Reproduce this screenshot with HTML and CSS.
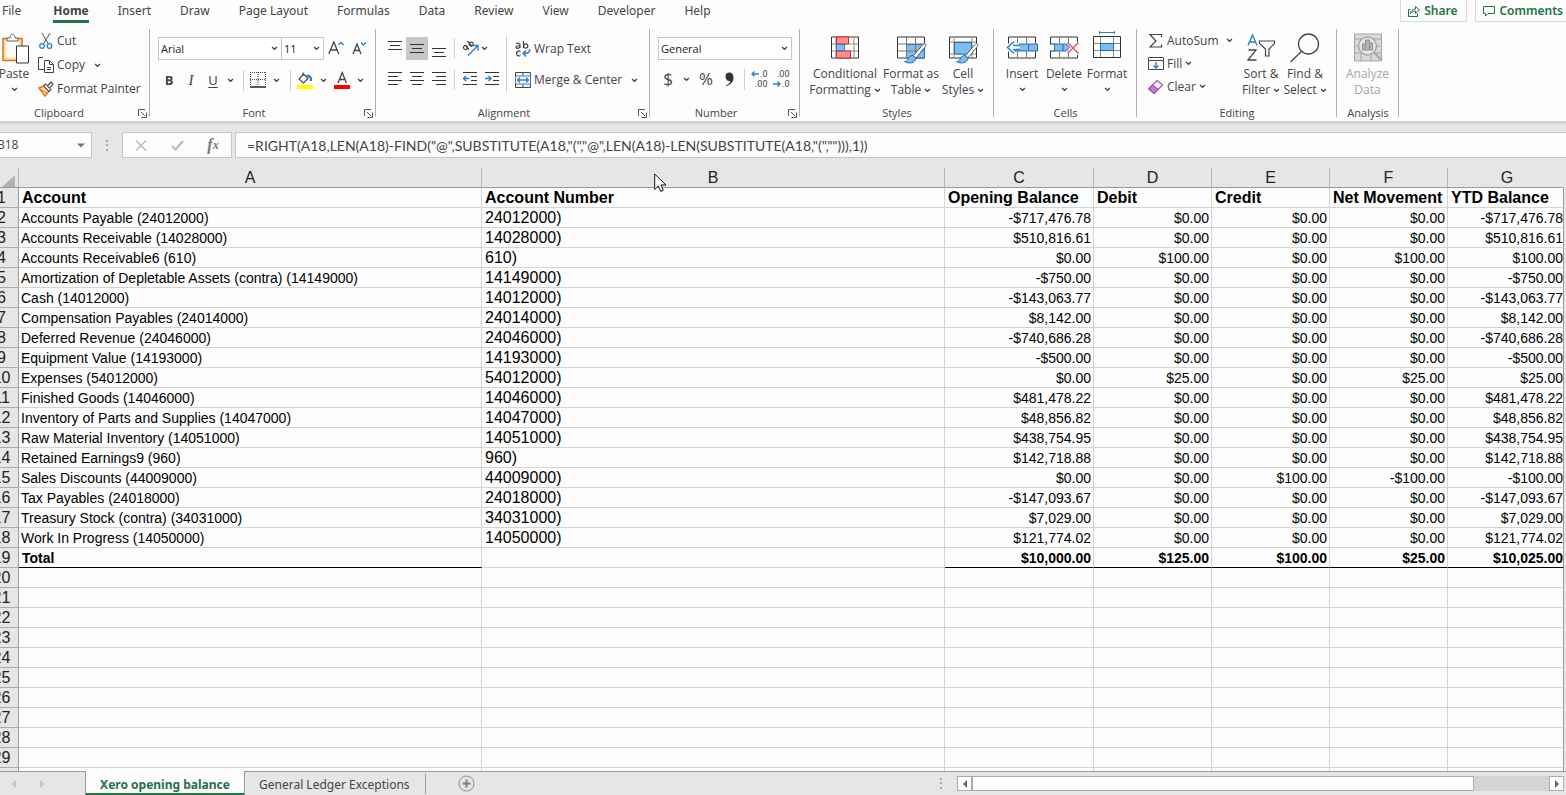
FILE: index.html
```html
<!DOCTYPE html>
<html lang="en">
<head>
<meta charset="utf-8">
<title>Xero opening balance</title>
<link rel="stylesheet" href="styles.css">
</head>
<body>
<svg class="defs" aria-hidden="true">
  <symbol id="chev" viewBox="0 0 7 5"><path d="M1 1 3.500 3.300 6 1" fill="none" stroke="#444" stroke-width="1.300"/></symbol>
  <symbol id="launch" viewBox="0 0 9 9"><path d="M.5 7V.5H7M3 3l4 4M8.500 3.500v5h-5" fill="none" stroke="#555"/></symbol>
  <symbol id="brush" viewBox="0 0 24 22"><path d="M22.500 1.500c-1-1-2 0-3 1l-9 10.500 2.500 2.500 8.500-10.500c1-1.300 2-2.500 1-3.500z" fill="#fff" stroke="#555"/><path d="M10 13c-3 0-4.500 2-5 4-.5 1.500-2 2-3.500 2 4 2.500 11 2 11.500-3.500z" fill="#83bbea" stroke="#1b6fb8"/></symbol>
</svg>

<header class="tabs">
  <nav class="tabs-list">
    <button class="tab">File</button>
    <button class="tab tab-active">Home</button>
    <button class="tab">Insert</button>
    <button class="tab">Draw</button>
    <button class="tab">Page Layout</button>
    <button class="tab">Formulas</button>
    <button class="tab">Data</button>
    <button class="tab">Review</button>
    <button class="tab">View</button>
    <button class="tab">Developer</button>
    <button class="tab">Help</button>
  </nav>
  <button class="pill"><svg width="12" height="12" viewBox="0 0 12 12" fill="none" stroke="#217346"><path d="M2.500 4.500h-2v7h9v-3"/><path d="M2.500 8.500c.5-3 2-4.500 5-4.500V1.500l4 3.500-4 3.500V6c-2 0-3.500.5-5 2.500z"/></svg>Share</button>
  <button class="pill pill-end"><svg width="12" height="12" viewBox="0 0 12 12" fill="none" stroke="#217346"><path d="M.5 1.500h11v7H5L2.500 11V8.500h-2z"/></svg>Comments</button>
</header>

<section class="ribbon">
  <div class="group g-clipboard">
    <div class="group-body">
      <button class="big paste">
        <svg width="30" height="32" viewBox="0 0 30 32"><path d="M4 5h19v22H4z" fill="#fae0a0" stroke="#d9741d" stroke-width="1.500"/><path d="M7 8h13v16H7z" fill="#fdfdfd"/><path d="M8 7.500V4.500h3C11-.5 16-.5 16 4.500h3v3z" fill="#fdfdfd" stroke="#666"/><path d="M17.500 12.500h12v17h-12z" fill="#fff" stroke="#333"/></svg>
        <span>Paste</span><svg class="chev"><use href="#chev"/></svg>
      </button>
      <div class="stack">
        <button class="small"><svg width="16" height="16" viewBox="0 0 16 16" fill="none"><path d="M4 0l6.500 11M12 0L5.500 11" stroke="#555"/><circle cx="4" cy="13" r="2.300" stroke="#2b7fcb" stroke-width="1.300"/><circle cx="11.500" cy="13" r="2.300" stroke="#2b7fcb" stroke-width="1.300"/></svg>Cut</button>
        <button class="small"><svg width="16" height="16" viewBox="0 0 16 16" fill="#fff" stroke="#444"><path d="M6 12.500H.5V.5H5"/><path d="M6.500 3.500h5l4 4v8h-9z"/><path d="M11.500 3.500v4h4M9 10.500h4M9 12.500h4" fill="none"/></svg>Copy<svg class="chev"><use href="#chev"/></svg></button>
        <button class="small"><svg width="16" height="16" viewBox="0 0 16 16"><path d="M1 7l5-2 5 5-4 5z" fill="#fbd9a5" stroke="#e07317" stroke-width="1.400"/><path d="M3 9l6 3" stroke="#e07317"/><path d="M5.500 5l2-2 5.500 5.500-2 2zM9.500 5l3.500-4 2 2-3.500 4" fill="#fff" stroke="#555" stroke-width="1.200"/></svg>Format Painter</button>
      </div>
    </div>
    <footer class="group-label has-launch">Clipboard<svg class="launch"><use href="#launch"/></svg></footer>
  </div>

  <div class="group g-font">
    <div class="group-body rows">
      <div class="font-top">
        <div class="combo"><select aria-label="Font"><option>Arial</option></select><svg class="chev"><use href="#chev"/></svg></div>
        <div class="combo combo-size"><select aria-label="Font size"><option>11</option></select><svg class="chev"><use href="#chev"/></svg></div>
        <button class="icon" aria-label="Increase font size"><svg width="17" height="16" viewBox="0 0 17 16" fill="none"><path d="M.8 13L5.800 1 10.800 13M2.500 9h6.600" stroke="#444" stroke-width="1.300"/><path d="M10.500 4L13 1.500 15.500 4" stroke="#2b7fcb" stroke-width="1.300"/></svg></button>
        <button class="icon" aria-label="Decrease font size"><svg width="15" height="16" viewBox="0 0 15 16" fill="none"><path d="M1 13L5 3 9 13M2.500 9.500h5" stroke="#444" stroke-width="1.300"/><path d="M9 1.500L11.500 4 14 1.500" stroke="#2b7fcb" stroke-width="1.300"/></svg></button>
      </div>
      <div class="font-tools">
        <button class="icon glyph bold">B</button>
        <button class="icon glyph italic">I</button>
        <button class="icon glyph under">U</button>
        <svg class="chev"><use href="#chev"/></svg>
        <i class="bar"></i>
        <button class="icon" aria-label="Borders"><svg width="16" height="16" viewBox="0 0 16 16" stroke="#444"><path d="M0 .5h16M.5 0v14M15.500 0v14M8 0v14M0 7.500h16" stroke-dasharray="1 1"/><path d="M0 15h16" stroke="#222" stroke-width="1.500"/></svg></button>
        <svg class="chev"><use href="#chev"/></svg>
        <i class="bar"></i>
        <button class="icon" aria-label="Fill color"><svg width="16" height="18" viewBox="0 0 16 18"><path d="M6.500 3L11 7.500 6.500 12 2 8zM6 5V1.500" fill="#fff" stroke="#444" stroke-width="1.200"/><path d="M9.500 4.500c3 0 5 1.500 4.500 5.500" fill="none" stroke="#1b6fb8" stroke-width="2"/><path d="M0 14h16v4H0z" fill="#ff0"/></svg></button>
        <svg class="chev"><use href="#chev"/></svg>
        <button class="icon" aria-label="Font color"><svg width="16" height="18" viewBox="0 0 16 18"><path d="M4 12L8.200 1.500 12.400 12M5.500 8.500h5.500" fill="none" stroke="#444" stroke-width="1.300"/><path d="M0 14h16v4H0z" fill="red"/></svg></button>
        <svg class="chev"><use href="#chev"/></svg>
      </div>
    </div>
    <footer class="group-label has-launch">Font<svg class="launch"><use href="#launch"/></svg></footer>
  </div>

  <div class="group g-align">
    <div class="group-body">
      <div class="align-tools">
        <button class="icon" aria-label="Top align"><svg width="14" height="16" viewBox="0 0 14 16" stroke="#333"><path d="M0 .5h14M2 4.500h10M0 8.500h14"/></svg></button>
        <button class="icon pressed" aria-label="Middle align"><svg width="14" height="16" viewBox="0 0 14 16" stroke="#333"><path d="M0 3.500h14M2 7.500h10M0 11.500h14"/></svg></button>
        <button class="icon" aria-label="Bottom align"><svg width="14" height="16" viewBox="0 0 14 16" stroke="#333"><path d="M0 7.500h14M2 11.500h10M0 15.500h14"/></svg></button>
        <i class="bar"></i>
        <button class="icon" aria-label="Orientation"><svg width="17" height="17" viewBox="0 0 17 17" fill="none"><g stroke="#444" stroke-width="1.200"><circle cx="3.500" cy="7.500" r="2"/><path d="M3 5l4 4.500M5.500 1l4.500 5.500"/><circle cx="9.300" cy="4.200" r="2"/></g><path d="M6 15.500L15.500 6M11 5.500h5v5" stroke="#2b7fcb" stroke-width="1.400"/></svg></button>
        <svg class="chev"><use href="#chev"/></svg>
        <button class="icon" aria-label="Align left"><svg width="14" height="14" viewBox="0 0 14 14" stroke="#333"><path d="M0 .5h14M0 4.500h10M0 8.500h14M0 12.500h10"/></svg></button>
        <button class="icon" aria-label="Center"><svg width="14" height="14" viewBox="0 0 14 14" stroke="#333"><path d="M0 .5h14M2 4.500h10M0 8.500h14M2 12.500h10"/></svg></button>
        <button class="icon" aria-label="Align right"><svg width="14" height="14" viewBox="0 0 14 14" stroke="#333"><path d="M0 .5h14M4 4.500h10M0 8.500h14M4 12.500h10"/></svg></button>
        <i class="bar"></i>
        <button class="icon" aria-label="Decrease indent"><svg width="14" height="14" viewBox="0 0 14 14" stroke="#333" fill="none"><path d="M0 .5h14M8 4.500h6M8 8.500h6M0 12.500h14"/><path d="M6.500 6.500h-6M3 4L.5 6.500 3 9" stroke="#2b7fcb" stroke-width="1.400"/></svg></button>
        <button class="icon" aria-label="Increase indent"><svg width="14" height="14" viewBox="0 0 14 14" stroke="#333" fill="none"><path d="M0 .5h14M8 4.500h6M8 8.500h6M0 12.500h14"/><path d="M0 6.500h6M3.500 4L6 6.500 3.500 9" stroke="#2b7fcb" stroke-width="1.400"/></svg></button>
      </div>
      <div class="align-text">
        <button class="small"><svg width="16" height="16" viewBox="0 0 16 16" fill="none"><g stroke="#444" stroke-width="1.200"><path d="M1 2.500c2.500-1 4 0 4 1.500v3M5 4.500c-5 0-5 3-2 2.800L5 6M8.500 0v7"/><circle cx="10.700" cy="5" r="2.100"/><path d="M5.500 10.500c-2-1-4 0-4 2s2 3 4 2"/></g><path d="M14.500 8c.5 3-1 4.500-6 4.500M11 9.500l-3 3 3 3" stroke="#2b7fcb" stroke-width="1.500"/></svg>Wrap Text</button>
        <button class="small"><svg width="16" height="16" viewBox="0 0 16 16" fill="none"><path d="M.5 .5h15v15H.5zM8 0v4M8 12v4" stroke="#444"/><path d="M.5 4h15v8H.5z" fill="#fff" stroke="#2b7fcb"/><path d="M3 8h10M5 5.500L2.500 8 5 10.500M11 5.500L13.500 8 11 10.500" stroke="#2b7fcb" stroke-width="1.300"/></svg>Merge &amp; Center<svg class="chev"><use href="#chev"/></svg></button>
      </div>
    </div>
    <footer class="group-label has-launch">Alignment<svg class="launch"><use href="#launch"/></svg></footer>
  </div>

  <div class="group g-number">
    <div class="group-body rows">
      <div class="combo"><select aria-label="Number format"><option>General</option></select><svg class="chev"><use href="#chev"/></svg></div>
      <div class="number-tools">
        <button class="icon sign">$</button>
        <svg class="chev"><use href="#chev"/></svg>
        <button class="icon sign">%</button>
        <button class="icon" aria-label="Comma style"><svg width="9" height="14" viewBox="0 0 9 14"><path d="M1 13c3-.5 4-2 4-4C2.500 9.500.500 7.500.500 4.500.500 2 2 .5 4.300.5 7 .5 8.500 2.500 8.500 5.500 8.500 10 5.500 13 1 14z" fill="#333"/></svg></button>
        <i class="bar"></i>
        <button class="icon dec" aria-label="Increase decimal"><svg width="8" height="8" viewBox="0 0 8 8" fill="none" stroke="#2b7fcb" stroke-width="1.300"><path d="M8 4H1M3.500 1.500L1 4l2.500 2.500"/></svg><span>.0</span><span class="dec-wide">.00</span></button>
        <button class="icon dec" aria-label="Decrease decimal"><span class="dec-wide">.00</span><svg width="8" height="8" viewBox="0 0 8 8" fill="none" stroke="#2b7fcb" stroke-width="1.300"><path d="M0 4h7M4.500 1.500L7 4 4.500 6.500"/></svg><span>.0</span></button>
      </div>
    </div>
    <footer class="group-label has-launch">Number<svg class="launch"><use href="#launch"/></svg></footer>
  </div>

  <div class="group g-styles">
    <div class="group-body">
      <button class="big w80"><svg width="30" height="32" viewBox="0 0 30 32"><path d="M1.500 3.500h27v21h-27z" fill="#fff" stroke="#333"/><path d="M6 4v20M24 4v20M2 10.500h26M2 17.500h26" stroke="#8a8a76"/><path d="M6.500 3.500h12v7h-12zM6.500 17.500h14v7h-14z" fill="#ff8f94" stroke="#d8201f"/><path d="M6.500 11h8v6h-8z" fill="#83bbea" stroke="#2b7fcb"/></svg><span>Conditional</span><span>Formatting <svg class="chev"><use href="#chev"/></svg></span></button>
      <button class="big w52"><svg width="32" height="32" viewBox="0 0 32 32"><path d="M2.500 3.500h27v21h-27z" fill="#fff" stroke="#333"/><path d="M11.500 11h18v13.500h-18z" fill="#83bbea" stroke="#1b6fb8"/><path d="M11.500 4v20M20.500 4v20M3 10.500h26M3 17.500h26" stroke="#777" fill="none"/><use href="#brush" x="8" y="9" width="24" height="22"/></svg><span>Format as</span><span>Table <svg class="chev"><use href="#chev"/></svg></span></button>
      <button class="big w52"><svg width="32" height="32" viewBox="0 0 32 32"><path d="M2.500 3.500h27v21h-27z" fill="#fff" stroke="#333"/><path d="M7 4v20M3 8.500h26M25 4v20M3 20.500h26" stroke="#8a8a76"/><path d="M7.500 9h17v11.500h-17z" fill="#83bbea" stroke="#1b6fb8"/><use href="#brush" x="8" y="9" width="24" height="22"/></svg><span>Cell</span><span>Styles <svg class="chev"><use href="#chev"/></svg></span></button>
    </div>
    <footer class="group-label">Styles</footer>
  </div>

  <div class="group g-cells">
    <div class="group-body">
      <button class="big w42"><svg width="32" height="32" viewBox="0 0 32 32" fill="none"><path d="M2.500 10V3.500h27V10M2.500 18v6.500h27V18" stroke="#333"/><path d="M11.500 4v6M20.500 4v6M11.500 18v6M20.500 18v6" stroke="#777"/><path d="M13 10.500h18.500v7H8" fill="#83bbea" stroke="#1b6fb8"/><path d="M22.500 11v6" stroke="#1b6fb8"/><path d="M14 12H7M14 16H7M8 8L1.500 14 8 20" stroke="#2b7fcb" stroke-width="1.500"/><path d="M4 14h10" stroke="#fff" stroke-width="2"/></svg><span>Insert</span><svg class="chev"><use href="#chev"/></svg></button>
      <button class="big w42"><svg width="32" height="32" viewBox="0 0 32 32" fill="none"><path d="M2.500 10.500v-7h27v5M2.500 17.500v7h27v-3M2 10.500h5M2 17.500h5" stroke="#333"/><path d="M11.500 4v6M20.500 4v6M11.500 18v6M20.500 18v6" stroke="#777"/><path d="M6.500 10.500h12l3 3.500-3 3.500h-12zM15 11v6" fill="#83bbea" stroke="#1b6fb8"/><path d="M19.500 9l11 11M30.500 9l-11 11" stroke="#ee5a5a" stroke-width="1.600"/></svg><span>Delete</span><svg class="chev"><use href="#chev"/></svg></button>
      <button class="big w44"><svg width="32" height="33" viewBox="0 2 32 33" fill="none"><path d="M2.500 5.500h27v21h-27z" stroke="#333"/><path d="M9.500 6v20M22.500 6v20M3 12.500h26M3 19.500h26" stroke="#8a8a76"/><path d="M9.500 12.500h13v7h-13z" fill="#83bbea" stroke="#1b6fb8"/><path d="M8.500 1.500h15M8.500 0v3M23.500 0v3" stroke="#2b7fcb"/></svg><span>Format</span><svg class="chev"><use href="#chev"/></svg></button>
    </div>
    <footer class="group-label">Cells</footer>
  </div>

  <div class="group g-editing">
    <div class="group-body">
      <div class="stack">
        <button class="small spread"><svg width="16" height="16" viewBox="0 0 16 16" fill="none" stroke="#444" stroke-width="1.200"><path d="M13.500 4V1.500H2L8 8l-6 6h11.500v-2.500"/></svg>AutoSum<svg class="chev"><use href="#chev"/></svg></button>
        <button class="small"><svg width="16" height="16" viewBox="0 0 16 16" fill="none"><path d="M.5 1.500h15v12H.5zM1 4.500h14" stroke="#444"/><path d="M8 6v6M5.500 9.500L8 12l2.500-2.500" stroke="#2b7fcb" stroke-width="1.400"/></svg>Fill<svg class="chev"><use href="#chev"/></svg></button>
        <button class="small"><svg width="16" height="16" viewBox="0 0 16 16"><path d="M9 1.500L14.500 6 6 14.500.8 9.800z" fill="#fff" stroke="#a34fb0" stroke-width="1.200"/><path d="M4.500 6L10 10.500 6 14.500.8 9.800z" fill="#c77fd0" stroke="#a34fb0" stroke-width="1.200"/></svg>Clear<svg class="chev"><use href="#chev"/></svg></button>
      </div>
      <button class="big w44"><svg width="30" height="32" viewBox="0 0 30 32" fill="none"><path d="M2 12L6.500 1.500 11 12M3.500 8.500h6" stroke="#2b7fcb" stroke-width="1.400"/><path d="M2.500 16.500H10L2 26.500h8.500" stroke="#444" stroke-width="1.300"/><path d="M13.500 7.500h15v2.500l-5.500 5.500v7h-3.500v-7L13.500 10z" stroke="#444" stroke-width="1.200"/></svg><span>Sort &amp;</span><span>Filter <svg class="chev"><use href="#chev"/></svg></span></button>
      <button class="big w44"><svg width="30" height="32" viewBox="0 0 30 32" fill="none" stroke="#444" stroke-width="1.300"><circle cx="18.500" cy="10.500" r="10"/><path d="M11.500 18L.5 28.500"/></svg><span>Find &amp;</span><span>Select <svg class="chev"><use href="#chev"/></svg></span></button>
    </div>
    <footer class="group-label">Editing</footer>
  </div>

  <div class="group g-analysis">
    <div class="group-body">
      <button class="big disabled" disabled><svg width="28" height="32" viewBox="0 0 28 32" fill="none" stroke="#a6a6a6"><path d="M.5 .5h27v27H.5z" fill="#d9d9d9"/><path d="M0 5.500h28M0 19.500h28M0 12.500h28M7 20v8M17 20v8"/><circle cx="13.500" cy="12.500" r="9" fill="#e6e6e6" stroke-width="1.400"/><path d="M20 19l8 8" stroke-width="2"/><path d="M8.500 10.500h3v6h-3zM11.500 6.500h4v10h-4zM15.500 9.500h3v7h-3z" fill="#b5b5b5" stroke="#8c8c8c"/></svg><span>Analyze</span><span>Data</span></button>
    </div>
    <footer class="group-label">Analysis</footer>
  </div>
</section>

<section class="formula-bar">
  <div class="name-box"><input aria-label="Name box" value="B18"><svg width="8" height="5" viewBox="0 0 8 5"><path d="M0 .5h8L4 4.500z" fill="#777"/></svg></div>
  <svg class="dots" width="2" height="11" viewBox="0 0 2 11"><path d="M0 0h2v2H0zM0 4h2v2H0zM0 9h2v2H0z" fill="#a6a6a6"/></svg>
  <div class="fx-box">
    <button class="icon" aria-label="Cancel"><svg width="12" height="11" viewBox="0 0 12 11" stroke="#bdbdbd" stroke-width="1.500"><path d="M1 .5l10 10M11 .5l-10 10"/></svg></button>
    <button class="icon" aria-label="Enter"><svg width="13" height="11" viewBox="0 0 13 11" fill="none" stroke="#bdbdbd" stroke-width="2.200"><path d="M1 6l3.500 3.500L12 1"/></svg></button>
    <button class="icon fx">f<sub>x</sub></button>
  </div>
  <input class="formula" aria-label="Formula" value='=RIGHT(A18,LEN(A18)-FIND("@",SUBSTITUTE(A18,"(","@",LEN(A18)-LEN(SUBSTITUTE(A18,"(",""))),1))'>
</section>

<main class="sheet">
  <table class="grid">
    <colgroup><col class="c-row"><col><col><col class="c-open"><col class="c-num"><col class="c-num"><col class="c-num"><col class="c-ytd"></colgroup>
    <thead>
      <tr><th class="corner"><svg width="13" height="12" viewBox="0 0 13 12"><path d="M13 0v12H0z" fill="#b1b1b1"/></svg></th><th>A</th><th>B</th><th>C</th><th>D</th><th>E</th><th>F</th><th>G</th></tr>
    </thead>
    <tbody>
      <tr class="titles"><th>1</th><td>Account</td><td>Account Number</td><td>Opening Balance</td><td>Debit</td><td>Credit</td><td>Net Movement</td><td>YTD Balance</td></tr>
      <tr><th>2</th><td>Accounts Payable (24012000)</td><td>24012000)</td><td>-$717,476.78</td><td>$0.00</td><td>$0.00</td><td>$0.00</td><td>-$717,476.78</td></tr>
      <tr><th>3</th><td>Accounts Receivable (14028000)</td><td>14028000)</td><td>$510,816.61</td><td>$0.00</td><td>$0.00</td><td>$0.00</td><td>$510,816.61</td></tr>
      <tr><th>4</th><td>Accounts Receivable6 (610)</td><td>610)</td><td>$0.00</td><td>$100.00</td><td>$0.00</td><td>$100.00</td><td>$100.00</td></tr>
      <tr><th>5</th><td>Amortization of Depletable Assets (contra) (14149000)</td><td>14149000)</td><td>-$750.00</td><td>$0.00</td><td>$0.00</td><td>$0.00</td><td>-$750.00</td></tr>
      <tr><th>6</th><td>Cash (14012000)</td><td>14012000)</td><td>-$143,063.77</td><td>$0.00</td><td>$0.00</td><td>$0.00</td><td>-$143,063.77</td></tr>
      <tr><th>7</th><td>Compensation Payables (24014000)</td><td>24014000)</td><td>$8,142.00</td><td>$0.00</td><td>$0.00</td><td>$0.00</td><td>$8,142.00</td></tr>
      <tr><th>8</th><td>Deferred Revenue (24046000)</td><td>24046000)</td><td>-$740,686.28</td><td>$0.00</td><td>$0.00</td><td>$0.00</td><td>-$740,686.28</td></tr>
      <tr><th>9</th><td>Equipment Value (14193000)</td><td>14193000)</td><td>-$500.00</td><td>$0.00</td><td>$0.00</td><td>$0.00</td><td>-$500.00</td></tr>
      <tr><th>10</th><td>Expenses (54012000)</td><td>54012000)</td><td>$0.00</td><td>$25.00</td><td>$0.00</td><td>$25.00</td><td>$25.00</td></tr>
      <tr><th>11</th><td>Finished Goods (14046000)</td><td>14046000)</td><td>$481,478.22</td><td>$0.00</td><td>$0.00</td><td>$0.00</td><td>$481,478.22</td></tr>
      <tr><th>12</th><td>Inventory of Parts and Supplies (14047000)</td><td>14047000)</td><td>$48,856.82</td><td>$0.00</td><td>$0.00</td><td>$0.00</td><td>$48,856.82</td></tr>
      <tr><th>13</th><td>Raw Material Inventory (14051000)</td><td>14051000)</td><td>$438,754.95</td><td>$0.00</td><td>$0.00</td><td>$0.00</td><td>$438,754.95</td></tr>
      <tr><th>14</th><td>Retained Earnings9 (960)</td><td>960)</td><td>$142,718.88</td><td>$0.00</td><td>$0.00</td><td>$0.00</td><td>$142,718.88</td></tr>
      <tr><th>15</th><td>Sales Discounts (44009000)</td><td>44009000)</td><td>$0.00</td><td>$0.00</td><td>$100.00</td><td>-$100.00</td><td>-$100.00</td></tr>
      <tr><th>16</th><td>Tax Payables (24018000)</td><td>24018000)</td><td>-$147,093.67</td><td>$0.00</td><td>$0.00</td><td>$0.00</td><td>-$147,093.67</td></tr>
      <tr><th>17</th><td>Treasury Stock (contra) (34031000)</td><td>34031000)</td><td>$7,029.00</td><td>$0.00</td><td>$0.00</td><td>$0.00</td><td>$7,029.00</td></tr>
      <tr><th>18</th><td>Work In Progress (14050000)</td><td>14050000)</td><td>$121,774.02</td><td>$0.00</td><td>$0.00</td><td>$0.00</td><td>$121,774.02</td></tr>
      <tr class="total"><th>19</th><td>Total</td><td></td><td>$10,000.00</td><td>$125.00</td><td>$100.00</td><td>$25.00</td><td>$10,025.00</td></tr>
      <tr><th>20</th><td></td><td></td><td></td><td></td><td></td><td></td><td></td></tr>
      <tr><th>21</th><td></td><td></td><td></td><td></td><td></td><td></td><td></td></tr>
      <tr><th>22</th><td></td><td></td><td></td><td></td><td></td><td></td><td></td></tr>
      <tr><th>23</th><td></td><td></td><td></td><td></td><td></td><td></td><td></td></tr>
      <tr><th>24</th><td></td><td></td><td></td><td></td><td></td><td></td><td></td></tr>
      <tr><th>25</th><td></td><td></td><td></td><td></td><td></td><td></td><td></td></tr>
      <tr><th>26</th><td></td><td></td><td></td><td></td><td></td><td></td><td></td></tr>
      <tr><th>27</th><td></td><td></td><td></td><td></td><td></td><td></td><td></td></tr>
      <tr><th>28</th><td></td><td></td><td></td><td></td><td></td><td></td><td></td></tr>
      <tr><th>29</th><td></td><td></td><td></td><td></td><td></td><td></td><td></td></tr>
      <tr><th></th><td></td><td></td><td></td><td></td><td></td><td></td><td></td></tr>
    </tbody>
  </table>
</main>

<footer class="sheet-bar">
  <div class="sheet-nav">
    <svg width="5" height="8" viewBox="0 0 5 8"><path d="M5 0v8L0 4z" fill="#c3c3c3"/></svg>
    <svg width="5" height="8" viewBox="0 0 5 8"><path d="M0 0v8l5-4z" fill="#c3c3c3"/></svg>
  </div>
  <button class="sheet-tab sheet-active">Xero opening balance</button>
  <div class="sheet-rest">
    <button class="sheet-tab">General Ledger Exceptions</button>
    <i class="sheet-line"></i>
    <button class="icon add" aria-label="New sheet"><svg width="17" height="17" viewBox="0 0 17 17" fill="none"><circle cx="8.500" cy="8.500" r="7.500" stroke="#8c8c8c"/><path d="M8.500 4.500v8M4.500 8.500h8" stroke="#7c8466" stroke-width="2"/></svg></button>
    <svg class="dots scroll-dots" width="2" height="11" viewBox="0 0 2 11"><path d="M0 0h2v2H0zM0 4h2v2H0zM0 9h2v2H0z" fill="#a6a6a6"/></svg>
    <div class="scroll">
      <button class="scroll-end" aria-label="Scroll left"><svg width="4" height="8" viewBox="0 0 4 8"><path d="M4 0v8L0 4z" fill="#666b52"/></svg></button>
      <div class="scroll-track"><div class="scroll-thumb"></div></div>
      <button class="scroll-end" aria-label="Scroll right"><svg width="4" height="8" viewBox="0 0 4 8"><path d="M0 0v8l4-4z" fill="#666b52"/></svg></button>
    </div>
  </div>
</footer>

<svg class="pointer" width="13" height="20" viewBox="0 0 13 20" aria-hidden="true"><path d="M.7 1v15.500l3.600-3.500 2.400 5.500 2.600-1.200L7 12h5z" fill="#fff" stroke="#112"/></svg>
</body>
</html>
```
FILE: styles.css
```css
* { box-sizing: border-box; }

body {
  margin: 0;
  height: 100vh;
  display: flex;
  flex-direction: column;
  overflow: hidden;
  background: #e6e6e6;
  color: #444;
  font: 12px/16px "Open Sans", "Noto Sans", sans-serif;
}

button, input, select {
  margin: 0;
  padding: 0;
  border: 0;
  border-radius: 0;
  background: none;
  color: inherit;
  font: inherit;
  white-space: nowrap;
}

svg { flex: none; }
.defs { display: none; }
.chev { width: 7px; height: 5px; }

/* Ribbon tabs */
.tabs {
  flex: none;
  display: flex;
  height: 29px;
  background: #fdfdfd;
  overflow: hidden;
  font-family: "Noto Sans", "Open Sans", sans-serif;
}
.tabs-list {
  flex: 1;
  display: flex;
  gap: 29px;
  padding-left: 2px;
}
.tab {
  height: 23px;
  padding-top: 1px;
  border-bottom: 3px solid transparent;
}
.tab:first-child { margin-right: 3px; }
.tab-active {
  font-weight: 700;
  border-color: #217346;
}
.pill {
  display: flex;
  align-items: center;
  gap: 4px;
  height: 22px;
  margin-right: 8px;
  padding: 0 9px 0 7px;
  border: 1px solid #dadada;
  border-top: 0;
  color: #217346;
  font-weight: 600;
}
.pill-end { margin-right: 0; padding-right: 3px; border-right: 0; }

/* Ribbon */
.ribbon {
  flex: none;
  display: flex;
  height: 95px;
  background: #fdfdfd;
  border-bottom: 3px solid #d2d2d2;
}
.group {
  flex: none;
  display: flex;
  flex-direction: column;
  height: 92px;
  background: linear-gradient(#b1b1b1, #b1b1b1) right top / 1px 88px no-repeat;
}
.g-clipboard { width: 150px; }
.g-font { width: 226px; }
.g-align { width: 274px; }
.g-number { width: 150px; }
.g-styles { width: 194px; }
.g-cells { width: 143px; }
.g-editing { width: 200px; }
.g-analysis { width: 62px; }

.group-body { flex: 1; display: flex; }
.group-label {
  height: 16px;
  text-align: center;
  font-size: 11px;
}
.has-launch {
  display: grid;
  grid-template-columns: 1fr 12px;
  column-gap: 6px;
  align-items: center;
}
.g-clipboard .has-launch { padding-right: 0; text-indent: -14px; }
.launch { width: 9px; height: 9px; }

.big {
  display: flex;
  flex-direction: column;
  align-items: center;
  padding-top: 4px;
}
.big > svg:first-child { height: 33px; overflow: visible; }
.big > .chev { margin-top: 5px; }
.big span { display: flex; align-items: center; gap: 3px; }
.paste { width: 34px; padding-right: 6px; }
.w80 { width: 80px; }
.w52 { width: 52px; }
.w44 { width: 44px; }
.w42 { width: 42px; }
.disabled { width: 61px; color: #a6a6a6; }

.stack { display: flex; flex-direction: column; }
.small {
  display: flex;
  align-items: center;
  gap: 3px;
  height: 24px;
}
.small .chev { margin-left: 6px; }
.g-clipboard .stack { padding-left: 4px; }

.icon { display: flex; align-items: center; justify-content: center; height: 24px; }
.bar { width: 1px; height: 21px; background: #d0d0d0; }

.rows { flex-direction: column; gap: 7px; padding: 8px 8px 0; }
.combo {
  display: grid;
  grid-template-columns: 1fr 10px;
  align-items: center;
  height: 23px;
  border: 1px solid #c6c6c6;
  background: #fff;
  color: #222;
  font-size: 11px;
}
.combo select {
  grid-area: 1 / 1 / 2 / 3;
  appearance: none;
  height: 21px;
  padding-left: 2px;
}
.combo .chev { grid-area: 1 / 2; }

.font-top { display: grid; grid-template-columns: 124px 42px 24px 22px; }
.combo-size { border-left: 0; }
.font-tools {
  display: grid;
  grid-template-columns: 22px 22px 22px 13px 13px 16px 20px 8px 22px 14px 24px 12px;
  align-items: center;
  justify-items: center;
}
.glyph { font-size: 13px; }
.bold { font-weight: 700; }
.italic { font-family: "Liberation Serif", serif; font-style: italic; font-size: 15px; }
.under { text-decoration: underline; text-underline-offset: 2px; }

.align-tools {
  display: grid;
  grid-template-columns: 22px 22px 22px 9px 22px 22px;
  grid-template-rows: 23px 24px;
  gap: 7px 0;
  align-items: center;
  justify-items: center;
  height: 64px;
  padding: 8px 4px 0 8px;
  background: linear-gradient(#d0d0d0, #d0d0d0) right 6px / 1px 58px no-repeat;
}
.align-tools .icon { width: 22px; }
.align-tools .chev { justify-self: start; }
.align-tools .pressed { background: #c6c6c6; height: 23px; }
.align-text { display: flex; flex-direction: column; gap: 7px; padding: 8px 0 0 8px; }

.number-tools {
  display: grid;
  grid-template-columns: 20px 16px 24px 22px 8px 22px 22px;
  align-items: center;
  justify-items: center;
}
.sign { font-size: 17px; }
.dec {
  display: grid;
  grid-template-columns: 8px 9px;
  align-content: center;
  justify-items: end;
  align-items: center;
  font: 9px/10px Roboto, sans-serif;
}
.dec-wide { grid-column: 1 / 3; }

.g-styles .group-body { padding-left: 5px; }
.g-cells .group-body { padding-left: 7px; }
.g-editing .group-body { padding-left: 11px; }
.g-editing .stack { width: 91px; }
.g-editing .small { height: 23px; }
.g-editing .small .chev { margin-left: 0; }
.g-editing .spread .chev { margin-left: auto; margin-right: 6px; }

/* Formula bar */
.formula-bar {
  flex: none;
  display: flex;
  align-items: center;
  height: 44px;
  padding-top: 8px;
  padding-bottom: 10px;
}
.name-box {
  display: flex;
  align-items: center;
  width: 102px;
  height: 26px;
  margin-left: -10px;
  padding: 0 6px;
  border: 1px solid #c6c6c6;
  background: #fdfdfd;
}
.name-box input { flex: 1; min-width: 0; }
.dots { margin: 0 14px; }
.fx-box {
  display: grid;
  grid-template-columns: repeat(3, 1fr);
  align-items: center;
  width: 110px;
  height: 26px;
  border: 1px solid #c6c6c6;
  background: #fdfdfd;
}
.fx { font: italic 700 16px/16px "Liberation Serif", serif; color: #777; }
.fx sub { font-size: 12px; }
.formula {
  flex: 1;
  height: 26px;
  margin-left: 3px;
  padding: 0 11px;
  border: 1px solid #c6c6c6;
  border-right: 0;
  background: #fdfdfd;
  font: 14px/18px Lato, sans-serif;
}

/* Worksheet */
.sheet { flex: 1; min-height: 0; overflow: hidden; }
.grid {
  table-layout: fixed;
  border-collapse: separate;
  border-spacing: 0;
  width: calc(100% + 13px);
  margin-left: -15px;
  color: #000;
  font: 14px/18px "Liberation Sans", Arial, sans-serif;
}
.c-row { width: 34px; }
.c-open { width: 149px; }
.c-num { width: 118px; }
.c-ytd { width: 116px; }
.grid th, .grid td {
  height: 20px;
  padding: 1px 2px 0;
  overflow: hidden;
  white-space: nowrap;
}
.grid th { font-size: 16px; font-weight: 400; color: #222; background: #e6e6e6; }
.grid thead th { border-right: 1px solid #b8b8b8; border-bottom: 1px solid #999; }
.grid thead th:last-child { padding-left: 5px; border-right-color: transparent; }
.grid .corner { padding: 0 3px 0 0; text-align: right; line-height: 0; vertical-align: bottom; }
.grid tbody th { border-right: 1px solid #999; border-bottom: 1px solid #ababab; }
.grid td {
  border-right: 1px solid #d4d4d4;
  border-bottom: 1px solid #d4d4d4;
  background: #fdfdfd;
  text-align: right;
}
.grid td:nth-child(2), .grid td:nth-child(3) { text-align: left; }
.grid td:nth-child(3) { padding-left: 3px; font-size: 16px; }
.grid td:last-child { padding-right: 0; border-right-color: #999; }
.grid .titles td { padding-left: 3px; text-align: left; font-size: 16px; font-weight: 700; }
.grid .total td { padding-left: 3px; font-weight: 700; border-bottom-color: #000; }
.grid .total td:nth-child(3) { border-bottom-color: #d4d4d4; }

/* Sheet tabs */
.sheet-bar {
  flex: none;
  display: flex;
  height: 24px;
  font-family: "Noto Sans", "Open Sans", sans-serif;
}
.sheet-nav {
  display: flex;
  align-items: center;
  gap: 24px;
  width: 85px;
  padding-left: 11px;
  border-top: 1px solid #999;
}
.sheet-tab { padding: 2px 14px 0; }
.sheet-active {
  width: 160px;
  padding: 3px 0 0;
  border: solid #999;
  border-width: 0 1px;
  background: linear-gradient(#217346, #217346) left bottom / 100% 2px no-repeat #fdfdfd;
  color: #217346;
  font-weight: 700;
}
.sheet-rest {
  flex: 1;
  display: flex;
  align-items: center;
  border-top: 1px solid #999;
  padding-right: 2px;
}
.sheet-line { width: 1px; height: 20px; margin-left: 1px; background: #999; }
.add { margin-left: 32px; }
.scroll-dots { margin: 0 15px 0 auto; }
.scroll { display: flex; width: 46%; height: 15px; }
.scroll-end {
  display: flex;
  align-items: center;
  justify-content: center;
  width: 15px;
  border: 1px solid #ababab;
  background: #fff;
}
.scroll-track { flex: 1; background: #d4d4d4; }
.scroll-thumb { width: 87%; height: 15px; border: 1px solid #ababab; background: #fff; }

.pointer { position: absolute; left: 654px; top: 173px; }
```
